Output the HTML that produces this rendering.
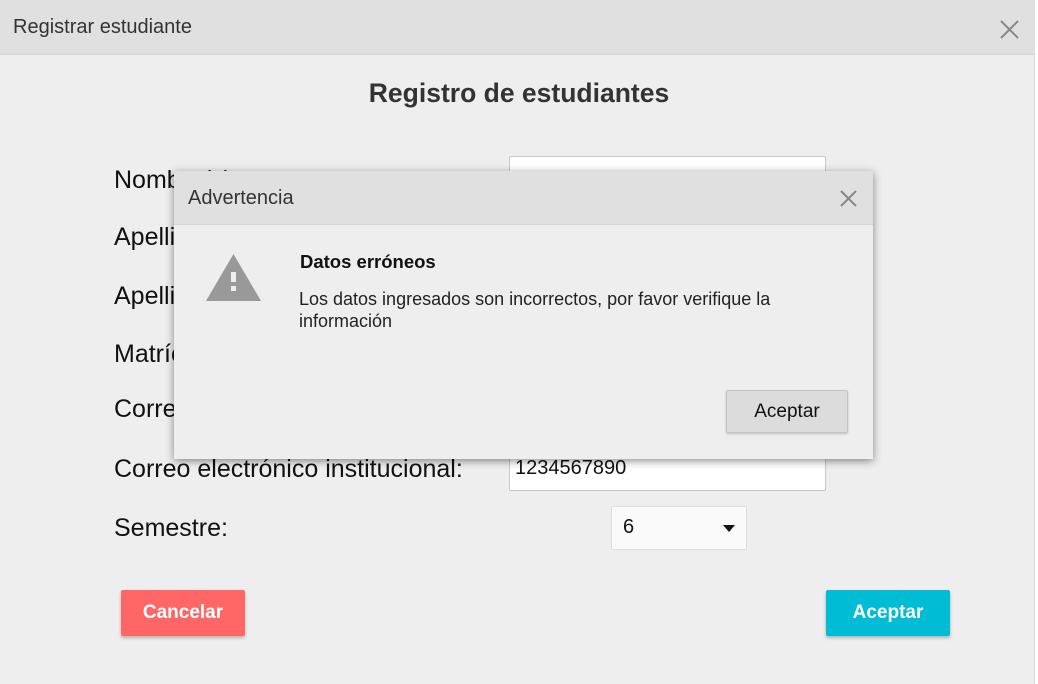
<!DOCTYPE html>
<html><head><meta charset="utf-8"><style>
*{box-sizing:border-box;margin:0;padding:0}
body{width:1038px;height:684px;background:#fff;font-family:"Liberation Sans",sans-serif;position:relative;overflow:hidden}
.win{position:absolute;left:0;top:0;width:1035px;height:684px;background:#eeeeee;border-right:1px solid #d8d8d8}
.hdr{position:absolute;left:0;top:0;width:1035px;height:55px;background:#e0e0e0;border-bottom:1px solid #d4d4d4}
.t{position:absolute;white-space:nowrap}
.lbl{position:absolute;left:114px;font-size:25px;color:#111}
.inp{position:absolute;left:509px;width:317px;height:41px;background:#fff;border:1px solid #c8c8c8;border-radius:2px;font-size:20px;padding:6px 5px;color:#111}
.btn{position:absolute;width:124px;height:46px;color:#fff;font-weight:bold;font-size:19px;text-align:center;line-height:46px;border-radius:2px;box-shadow:0 2px 3px rgba(0,0,0,.25)}
.dlg{position:absolute;left:174px;top:171px;width:699px;height:288px;background:#eeeeee;box-shadow:0 2px 8px rgba(0,0,0,.45)}
.dh{height:54px;background:#e0e0e0;border-bottom:1px solid #d6d6d6}
</style></head><body>
<div class="win">
 <div class="hdr">
  <div class="t" style="left:13px;top:16px;font-size:20px;color:#333">Registrar estudiante</div>
  <svg style="position:absolute;left:1000px;top:20px" width="19" height="19"><path d="M1 1L18 18M18 1L1 18" stroke="#888" stroke-width="2"/></svg>
 </div>
 <div class="t" style="left:0;width:1038px;text-align:center;top:78px;font-size:26.5px;font-weight:bold;color:#333">Registro de estudiantes</div>
 <div class="lbl" style="top:166px">Nombre(s):</div>
 <div class="lbl" style="top:223px">Apellido paterno:</div>
 <div class="lbl" style="top:282px">Apellido materno:</div>
 <div class="lbl" style="top:340px">Matrícula:</div>
 <div class="lbl" style="top:395px">Correo electrónico:</div>
 <div class="lbl" style="top:455px">Correo electrónico institucional:</div>
 <div class="lbl" style="top:514px">Semestre:</div>
 <div class="inp" style="top:156px"></div>
 <div class="inp" style="top:450px">1234567890</div>
 <div style="position:absolute;left:611px;top:506px;width:136px;height:44px;background:#fafafa;border:1px solid #ddd;border-radius:2px;font-size:20px;padding:9px 11px;color:#111">6
  <svg style="position:absolute;right:11px;top:18px" width="12" height="7"><path d="M0 0H12L6 7Z" fill="#111"/></svg></div>
 <div class="btn" style="left:121px;top:590px;background:#ff6666">Cancelar</div>
 <div class="btn" style="left:826px;top:590px;background:#00bcd4">Aceptar</div>
</div>
<div class="dlg">
 <div class="dh">
  <div class="t" style="left:14px;top:16px;font-size:20px;color:#333">Advertencia</div>
  <svg style="position:absolute;left:666px;top:19px" width="17" height="17"><path d="M1 1L16 16M16 1L1 16" stroke="#888" stroke-width="2"/></svg>
 </div>
 <svg style="position:absolute;left:32px;top:83px" width="55" height="48"><path d="M27.5 0L55 47H0Z" fill="#999"/><rect x="25" y="18" width="5" height="10" fill="#eee"/><rect x="25" y="32" width="5" height="5" fill="#eee"/></svg>
 <div class="t" style="left:126px;top:80px;font-size:18.5px;font-weight:bold;color:#111">Datos erróneos</div>
 <div class="t" style="left:125px;top:117px;font-size:18px;color:#222;line-height:22px">Los datos ingresados son incorrectos, por favor verifique la<br>información</div>
 <div style="position:absolute;left:552px;top:219px;width:122px;height:43px;background:#dcdcdc;border:1px solid #c4c4c4;border-radius:2px;text-align:center;line-height:41px;font-size:19px;color:#111;box-shadow:0 1px 2px rgba(0,0,0,.2)">Aceptar</div>
</div>
</body></html>
